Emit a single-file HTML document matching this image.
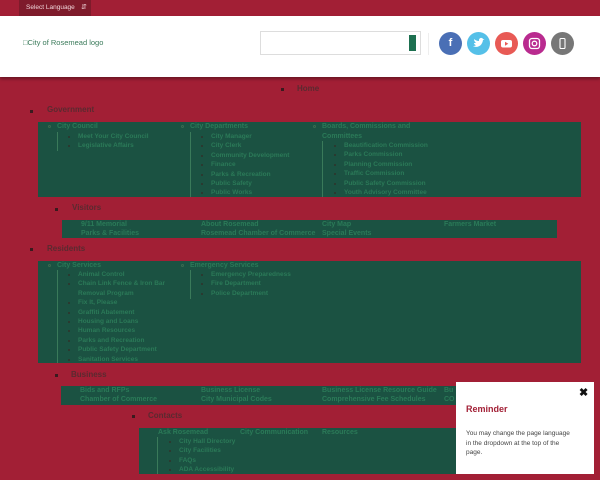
<!DOCTYPE html>
<html><head><meta charset="utf-8"><style>
*{margin:0;padding:0;box-sizing:border-box}
body{width:600px;height:480px;overflow:hidden;background:#a21f35;font-family:"Liberation Sans",sans-serif;position:relative}
.a{position:absolute;white-space:nowrap}
.t{font-size:6.5px;font-weight:bold;color:#2b7a58;line-height:9px}
.h{font-size:8px;font-weight:bold;color:#5a2a30}
.g{position:absolute;background:#1b5242}
.b{position:absolute;width:3px;height:3px;background:#3a1a1e}
.c{position:absolute;width:3px;height:3px;border:1px solid #3a6a50;border-radius:50%}
.s{position:absolute;width:2px;height:2px;background:#2a3a30}
.l{position:absolute;width:1px;background:#3a7a5a}
.ic{position:absolute;width:23px;height:23px;border-radius:50%;top:32px;color:#fff;font-size:11px;font-weight:bold;text-align:center;line-height:23px}
ul.q{list-style:square;color:#2a3a30}
ul.q li span{color:#2b7a58}
</style></head><body>
<div class="a" style="left:19px;top:0;width:72px;height:16px;background:#7e1b2b;color:#f0d6da;font-size:6.5px;line-height:16px;padding-left:7px">Select Language <span style="position:absolute;left:62px;font-size:7px">&#8693;</span></div>
<div class="a" style="left:0;top:16px;width:600px;height:61px;background:#fff;box-shadow:0 2px 3px rgba(0,0,0,.35)"></div>
<div class="a" style="left:23px;top:38px;font-size:7.5px;color:#3a7a5a">&#9633;City of Rosemead logo</div>
<div class="a" style="left:260px;top:31px;width:161px;height:24px;border:1px solid #ddd;background:#fff"></div>
<div class="a" style="left:409px;top:35px;width:7px;height:16px;background:#1d7050"></div>
<div class="a" style="left:428px;top:33px;width:1px;height:22px;background:#eee"></div>
<div class="ic" style="left:439px;background:#4a6fb5">f</div>
<div class="ic" style="left:467px;background:#55c0e8">
<svg width="23" height="23" viewBox="0 0 23 23"><path d="M6 14c3 2 9 1 10-6l1.5-1-1.5 0c-1-2-4-1-4 1v1c-2 0-4-1-5-2 0 2 1 3 2 4-1 0-1.5 0-2 0 0 1 1 2 2 2-1 1-2 1-3 1z" fill="#fff"/></svg></div>
<div class="ic" style="left:495px;background:#e85a55"><svg width="23" height="23"><rect x="6" y="8" width="11" height="7.5" rx="2" fill="#fff"/><path d="M10 9.8v4l3.3-2z" fill="#e85a55"/></svg></div>
<div class="ic" style="left:523px;background:#b92b8f"><svg width="23" height="23"><rect x="6.5" y="6.5" width="10" height="10" rx="2.5" fill="none" stroke="#fff" stroke-width="1.3"/><circle cx="11.5" cy="11.5" r="2.3" fill="none" stroke="#fff" stroke-width="1.3"/></svg></div>
<div class="ic" style="left:551px;background:#777"><svg width="23" height="23"><rect x="9" y="6.5" width="5" height="10" rx="1" fill="none" stroke="#fff" stroke-width="1.1"/></svg></div>

<div class="b" style="left:281px;top:88px"></div><div class="a h" style="left:297px;top:84px">Home</div>
<div class="b" style="left:30px;top:110px"></div><div class="a h" style="left:47px;top:105px">Government</div>

<div class="g" style="left:38px;top:122px;width:543px;height:75px"></div>
<div class="c" style="left:48px;top:125px"></div><div class="a t" style="left:57px;top:122px;font-size:7px">City Council</div>
<div class="l" style="left:57px;top:132px;height:19px"></div>
<ul class="a t q" style="left:78px;top:132px;line-height:9.4px"><li><span>Meet Your City Council</span></li><li><span>Legislative Affairs</span></li></ul>
<div class="c" style="left:181px;top:125px"></div><div class="a t" style="left:190px;top:122px;font-size:7px">City Departments</div>
<div class="l" style="left:190px;top:132px;height:65px"></div>
<ul class="a t q" style="left:211px;top:132px;line-height:9.4px"><li><span>City Manager</span></li><li><span>City Clerk</span></li><li><span>Community Development</span></li><li><span>Finance</span></li><li><span>Parks &amp; Recreation</span></li><li><span>Public Safety</span></li><li><span>Public Works</span></li></ul>
<div class="c" style="left:313px;top:125px"></div><div class="a t" style="left:322px;top:122px;font-size:7px;line-height:9.5px">Boards, Commissions and<br>Committees</div>
<div class="l" style="left:322px;top:141px;height:56px"></div>
<ul class="a t q" style="left:344px;top:141px;line-height:9.4px"><li><span>Beautification Commission</span></li><li><span>Parks Commission</span></li><li><span>Planning Commission</span></li><li><span>Traffic Commission</span></li><li><span>Public Safety Commission</span></li><li><span>Youth Advisory Committee</span></li></ul>

<div class="b" style="left:55px;top:208px"></div><div class="a h" style="left:72px;top:203px">Visitors</div>
<div class="g" style="left:62px;top:220px;width:495px;height:18px"></div>
<div class="a t" style="left:81px;top:220px;font-size:7px">9/11 Memorial<br>Parks &amp; Facilities</div>
<div class="a t" style="left:201px;top:220px;font-size:7px">About Rosemead<br>Rosemead Chamber of Commerce</div>
<div class="a t" style="left:322px;top:220px;font-size:7px">City Map<br>Special Events</div>
<div class="a t" style="left:444px;top:220px;font-size:7px">Farmers Market</div>

<div class="b" style="left:30px;top:248px"></div><div class="a h" style="left:47px;top:244px">Residents</div>
<div class="g" style="left:38px;top:261px;width:543px;height:102px"></div>
<div class="c" style="left:48px;top:264px"></div><div class="a t" style="left:57px;top:261px;font-size:7px">City Services</div>
<div class="l" style="left:57px;top:270px;height:93px"></div>
<ul class="a t q" style="left:78px;top:270px;line-height:9.4px"><li><span>Animal Control</span></li><li><span>Chain Link Fence &amp; Iron Bar<br>Removal Program</span></li><li><span>Fix It, Please</span></li><li><span>Graffiti Abatement</span></li><li><span>Housing and Loans</span></li><li><span>Human Resources</span></li><li><span>Parks and Recreation</span></li><li><span>Public Safety Department</span></li><li><span>Sanitation Services</span></li></ul>
<div class="c" style="left:181px;top:264px"></div><div class="a t" style="left:190px;top:261px;font-size:7px">Emergency Services</div>
<div class="l" style="left:190px;top:270px;height:29px"></div>
<ul class="a t q" style="left:211px;top:270px;line-height:9.4px"><li><span>Emergency Preparedness</span></li><li><span>Fire Department</span></li><li><span>Police Department</span></li></ul>

<div class="b" style="left:55px;top:374px"></div><div class="a h" style="left:71px;top:370px">Business</div>
<div class="g" style="left:61px;top:386px;width:400px;height:19px"></div>
<div class="a t" style="left:80px;top:386px;font-size:7px">Bids and RFPs<br>Chamber of Commerce</div>
<div class="a t" style="left:201px;top:386px;font-size:7px">Business License<br>City Municipal Codes</div>
<div class="a t" style="left:322px;top:386px;font-size:7px">Business License Resource Guide<br>Comprehensive Fee Schedules</div>
<div class="a t" style="left:444px;top:386px;font-size:7px">Bu<br>CO</div>

<div class="b" style="left:132px;top:415px"></div><div class="a h" style="left:148px;top:411px">Contacts</div>
<div class="g" style="left:139px;top:428px;width:320px;height:46px"></div>
<div class="a t" style="left:158px;top:428px;font-size:7px">Ask Rosemead</div>
<div class="a t" style="left:240px;top:428px;font-size:7px">City Communication</div>
<div class="a t" style="left:322px;top:428px;font-size:7px">Resources</div>
<div class="l" style="left:157px;top:437px;height:37px"></div>
<ul class="a t q" style="left:179px;top:437px;line-height:9.4px"><li><span>City Hall Directory</span></li><li><span>City Facilities</span></li><li><span>FAQs</span></li><li><span>ADA Accessibility</span></li></ul>

<div class="a" style="left:456px;top:382px;width:138px;height:92px;background:#fff"></div>
<div class="a" style="left:579px;top:386px;font-size:11px;font-weight:bold;color:#111">&#10006;</div>
<div class="a" style="left:466px;top:404px;font-size:9px;font-weight:bold;color:#a21f35">Reminder</div>
<div class="a" style="left:466px;top:429px;font-size:6.5px;line-height:9.5px;color:#444">You may change the page language<br>in the dropdown at the top of the<br>page.</div>
</body></html>
